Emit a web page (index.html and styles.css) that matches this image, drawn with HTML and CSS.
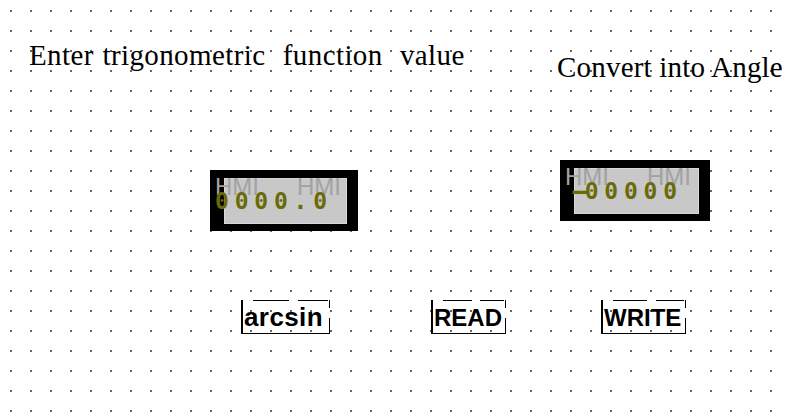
FILE: index.html
```html
<!DOCTYPE html>
<html>
<head>
    <title>Trig Converter</title>
    <link rel="stylesheet" href="styles.css">
</head>
<body>
    <div class="canvas">
        <div class="label label-input">Enter trigonometric  function  value</div>
        <div class="label label-output">Convert into Angle</div>

        <!-- numeric displays -->
        <div class="display display-input">
            <div class="screen"></div>
            <span class="hmi hmi-left">HMI</span>
            <span class="hmi hmi-right">HMI</span>
            <span class="value">0000.0</span>
        </div>
        <div class="display display-output">
            <div class="screen"></div>
            <span class="hmi hmi-left">HMI</span>
            <span class="hmi hmi-right">HMI</span>
            <span class="value"><span class="minus">-</span>00000</span>
        </div>

        <!-- buttons -->
        <button type="button" class="btn btn-arcsin">arcsin</button>
        <button type="button" class="btn btn-read">READ</button>
        <button type="button" class="btn btn-write">WRITE</button>
    </div>
</body>
</html>
```
FILE: styles.css
```css
html, body {
    margin: 0;
    padding: 0;
    background: #fff;
}

.canvas {
    position: relative;
    width: 789px;
    height: 416px;
    overflow: hidden;
    /* dotted design grid, 2px dots every 20px */
    background-color: #fff;
    background-image:
        linear-gradient(to right, #fff 18px, transparent 18px),
        linear-gradient(to bottom, #fff 18px, #666 18px);
    background-size: 20px 20px;
    background-position: -8px -8px;
}

.label {
    position: absolute;
    font-family: "Liberation Serif", "Times New Roman", serif;
    font-size: 29px;
    line-height: 29px;
    color: #000;
    white-space: pre;
    letter-spacing: 0.2px;
}

.label-input {
    left: 29px;
    top: 41px;
    word-spacing: 1px;
    letter-spacing: 0.4px;
}

.label-output {
    left: 557px;
    top: 53px;
}

.display {
    position: absolute;
    width: 148px;
    height: 61px;
    background: #000;
}

.display-input {
    left: 210px;
    top: 170px;
}

.display-output {
    left: 560px;
    top: 160px;
    width: 150px;
}

.screen {
    position: absolute;
    left: 14px;
    top: 8px;
    right: 11px;
    bottom: 7px;
    background: #c8c8c8;
    border: 1px solid #d8d8d8;
    box-sizing: border-box;
}

.hmi {
    position: absolute;
    top: 5px;
    font-family: "Liberation Sans", Arial, sans-serif;
    font-size: 24px;
    line-height: 24px;
    color: #a2a2a2;
}

.hmi-left {
    left: 5px;
}

.hmi-right {
    left: 87px;
}

.value {
    position: absolute;
    left: 5px;
    top: 20px;
    font-family: "DejaVu Sans Mono", monospace;
    font-weight: bold;
    font-size: 23px;
    line-height: 23px;
    letter-spacing: 5.8px;
    color: #6b6a08;
}

.minus {
    display: inline-block;
    transform: scaleX(2.2);
    transform-origin: left center;
}

.btn {
    position: absolute;
    top: 300px;
    height: 34px;
    margin: 0;
    padding: 2px 0 0 1px;
    box-sizing: border-box;
    background: transparent;
    border: none;
    border-left: 2px solid #000;
    border-bottom: 1px solid #000;
    font-family: "Liberation Sans", Arial, sans-serif;
    font-weight: bold;
    font-size: 24px;
    line-height: 24px;
    color: #000;
    text-align: left;
    cursor: pointer;
}

/* broken top edge and right bracket of the button frame */
.btn::before {
    content: "";
    position: absolute;
    left: 10px;
    right: 2px;
    top: 0;
    height: 1px;
    background: linear-gradient(to right, #000 0 48%, transparent 48% 60%, #000 60%);
}

.btn::after {
    content: "";
    position: absolute;
    right: 0;
    top: 0;
    bottom: 0;
    width: 1px;
    background: linear-gradient(to bottom, #000 0 25%, transparent 25% 55%, #000 55%);
}

.btn-arcsin {
    left: 241px;
    width: 89px;
    font-size: 26px;
    letter-spacing: 0.4px;
    padding-top: 1px;
}

.btn-read {
    left: 431px;
    width: 75px;
}

.btn-write {
    left: 601px;
    width: 85px;
}
```
